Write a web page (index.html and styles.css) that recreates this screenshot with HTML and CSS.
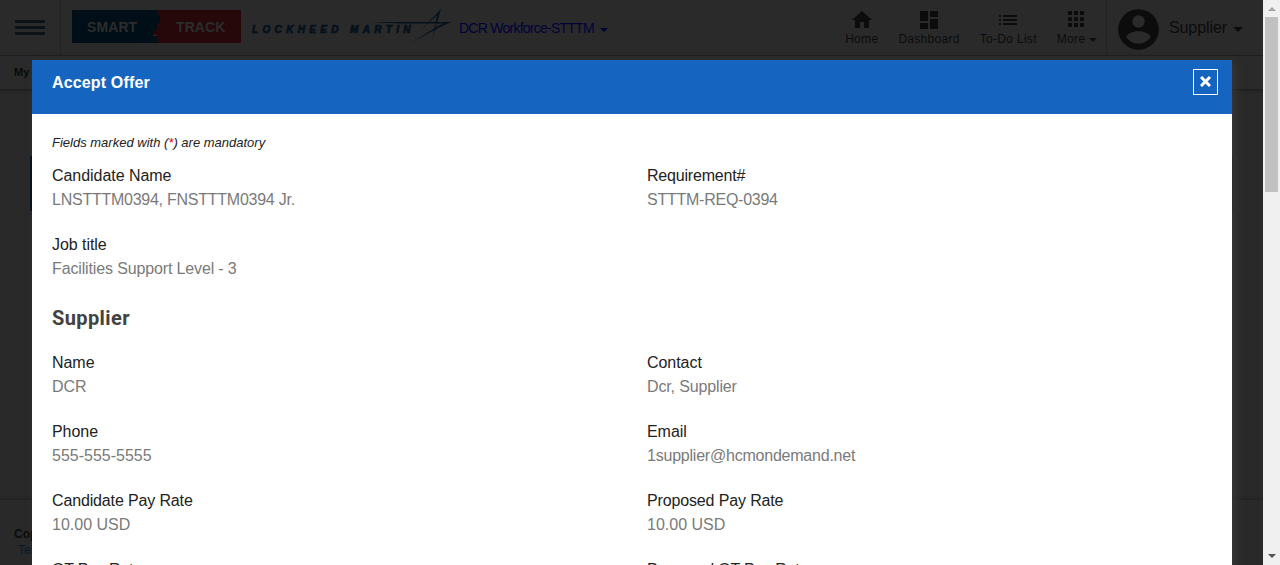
FILE: index.html
```
<!DOCTYPE html>
<html lang="en">
<head>
<meta charset="utf-8">
<title>Accept Offer</title>
<link rel="stylesheet" href="styles.css">
</head>
<body>
<div class="viewport">
  <div class="page">
    <header class="topbar">
      <div class="menu"><span></span><span></span><span></span></div>
      <div class="brand">
        <svg class="plates" width="169" height="33" viewBox="0 0 169 33"><path fill="#26080b" d="M81 0h88v33H85v-8h-4z"/><path fill="#000f17" d="M0 0h85v5h3v8h-3v7h-4v6h4v7H0z"/></svg>
        <span class="smart">SMART</span><span class="track">TRACK</span>
      </div>
      <div class="partner">
        <span class="partner-name">LOCKHEED MARTIN</span>
        <svg class="star" width="84" height="34" viewBox="0 0 84 34"><g fill="#05111c"><path d="M2 13L83 13L75 16L43 33L71 16L74 14.500H32z"/><path d="M72 0L52 21L68 6L63 33L67 17z"/></g><path fill="#2a2a2a" d="M64.500 14.800h4l-3.500 2z"/></svg>
      </div>
      <div class="client">DCR Workforce-STTTM</div><i class="caret caret-client"></i>
      <nav class="nav">
        <a class="home"><svg width="24" height="22" viewBox="0 0 24 22"><path d="M12 1L2 10h3v8h5v-6h4v6h5v-8h3z"/></svg><span>Home</span></a>
        <a class="dash"><svg width="24" height="22" viewBox="0 0 24 22"><path d="M3 1h8v10H3zM13 1h8v6h-8zM13 9h8v10h-8zM3 13h8v6H3z"/></svg><span>Dashboard</span></a>
        <a class="todo"><svg width="24" height="22" viewBox="0 0 24 22"><path d="M3 5h2v2H3zM7 5h14v2H7zM3 9h2v2H3zM7 9h14v2H7zM3 13h2v2H3zM7 13h14v2H7z"/></svg><span>To-Do List</span></a>
        <a class="more"><svg width="24" height="22" viewBox="0 0 24 22"><path d="M4 1h4v4H4zM10 1h4v4h-4zM16 1h4v4h-4zM4 7h4v4H4zM10 7h4v4h-4zM16 7h4v4h-4zM4 13h4v4H4zM10 13h4v4h-4zM16 13h4v4h-4z"/></svg><span>More <i class="caret"></i></span></a>
      </nav>
      <div class="user">
        <svg width="41" height="41" viewBox="0 0 41 41"><circle cx="20.5" cy="20.5" r="20.3" fill="#0c0c0c"/><circle cx="20.5" cy="12.5" r="6.2" fill="#2a2a2a"/><path fill="#2a2a2a" d="M8.3 28C9 24.300 16 22.300 20.500 22.300S32 24.300 32.700 28C27 36.900 14 36.900 8.300 28z"/></svg>
        <span>Supplier</span><i class="caret"></i>
      </div>
    </header>
    <div class="crumbs">My Offers</div>
    <main class="content"><div class="panel"></div></main>
    <footer class="foot"><b>Copyright</b><span>Terms</span></footer>
    <section class="modal">
      <div class="modal-head"><h1>Accept Offer</h1><button class="close"><svg width="11" height="11" viewBox="0 0 11 11"><path d="M1 1L10 10M10 1L1 10" stroke="#fff" stroke-width="3"/></svg></button></div>
      <div class="modal-body">
        <p class="note">Fields marked with (<em>*</em>) are mandatory</p>
        <dl class="fields">
          <div><dt>Candidate Name</dt><dd class="tight">LNSTTTM0394, FNSTTTM0394 Jr.</dd></div>
          <div><dt class="req">Requirement#</dt><dd class="tight">STTTM-REQ-0394</dd></div>
          <div><dt>Job title</dt><dd class="job">Facilities Support Level - 3</dd></div>
        </dl>
        <h2>Supplier</h2>
        <dl class="fields">
          <div><dt>Name</dt><dd>DCR</dd></div>
          <div><dt>Contact</dt><dd class="job">Dcr, Supplier</dd></div>
          <div><dt>Phone</dt><dd>555-555-5555</dd></div>
          <div><dt>Email</dt><dd class="mail">1supplier@hcmondemand.net</dd></div>
          <div><dt class="job">Candidate Pay Rate</dt><dd>10.00 USD</dd></div>
          <div><dt class="job">Proposed Pay Rate</dt><dd>10.00 USD</dd></div>
          <div><dt class="ot">OT Pay Rate</dt></div>
          <div><dt class="ot">Proposed OT Pay Rate</dt></div>
        </dl>
      </div>
    </section>
  </div>
  <div class="scroll"><i class="arrow-up"></i><div class="thumb"></div><i class="arrow-down"></i></div>
</div>
</body>
</html>
```

FILE: styles.css
```
* { box-sizing: border-box; }
body { margin: 0; overflow: hidden; font-family: "Liberation Sans", Arial, sans-serif; font-size: 16px; }
.viewport { display: flex; width: 1280px; height: 565px; overflow: hidden; }
.page { position: relative; display: flex; flex-direction: column; width: 1263px; height: 565px; background: #292929; overflow: hidden; }
.topbar { display: flex; flex: none; height: 56px; background: #2a2a2a; border-bottom: 1px solid #202020; color: #0c0c0c; }
.menu { width: 61px; padding: 20px 15px 0; border-right: 1px solid #222; display: flex; flex-direction: column; gap: 3px; }
.menu span { height: 3px; background: #0d1218; }
.brand { position: relative; width: 169px; height: 33px; margin: 10px 0 0 11px; color: #2c2c2c; font-weight: bold; font-size: 14px; line-height: 35px; display: flex; }
.plates { position: absolute; left: 0; top: 0; }
.smart, .track { position: relative; width: 89px; padding-left: 15px; letter-spacing: .1px; }
.track { width: 80px; }
.partner { position: relative; width: 218px; padding: 23px 0 0 11px; color: #05111c; }
.partner-name { font-size: 10px; line-height: 13px; font-weight: 900; font-style: italic; letter-spacing: 4.35px; white-space: nowrap; display: block; -webkit-text-stroke: .7px #05111c; }
.star { position: absolute; left: 128px; top: 9px; }
.client { width: 136px; padding-top: 20px; font-size: 14px; line-height: 17px; letter-spacing: -.75px; color: #02023a; white-space: nowrap; }
.caret { display: inline-block; border: 4px solid transparent; border-top-color: currentColor; border-bottom: 0; }
.caret-client { margin: 28px 0 0 5px; height: 4px; color: #02023a; }
.nav { position: relative; display: flex; flex: 1; justify-content: flex-end; padding: 9px 9px 0 0; gap: 20px; border-right: 1px solid #222; height: 54px; }
.nav a { display: flex; flex-direction: column; align-items: center; font-size: 12px; line-height: 14px; letter-spacing: .3px; white-space: nowrap; }
.nav svg { fill: #0c0c0c; margin-top: 1px; }
.nav .more { align-items: flex-start; }
.nav .more svg { margin-left: 7px; }
.nav .caret { margin-left: 0; vertical-align: 1px; }
.user { display: flex; width: 156px; padding: 9px 0 0 11px; font-size: 16px; }
.user span { margin: 9px 0 0 10px; line-height: 19px; letter-spacing: -.1px; }
.user .caret { margin: 18px 0 0 6px; height: 5px; border-width: 5px 5px 0; }
.crumbs { flex: none; height: 33px; padding: 9px 14px; background: #2a2a2a; box-shadow: 0 1px 3px #181818; font-size: 11px; line-height: 15px; font-weight: bold; color: #090909; }
.content { flex: 1; padding: 67px 30px 0; }
.panel { height: 55px; background: #02101f; }
.foot { flex: none; height: 65px; padding: 26px 14px; background: #292929; box-shadow: 0 -1px 3px #202020; font-size: 12px; line-height: 16px; color: #0b0b0b; }
.foot b, .foot span { display: block; }
.foot span { padding-left: 4px; color: #06192b; }
.modal { position: absolute; left: 32px; top: 60px; width: 1200px; height: 600px; background: #fff; box-shadow: 4px 3px 8px #363636; }
.modal-head { display: flex; justify-content: space-between; height: 54px; padding: 9px 14px 0 20px; background: #1565c0; color: #fff; }
h1 { margin: 4px 0 0; font-size: 16px; line-height: 19px; font-weight: bold; letter-spacing: .15px; }
.close { display: grid; place-items: center; width: 25px; height: 26px; padding: 0 0 2px; border: 1px solid #fff; background: none; }
.modal-body { padding: 20px 20px 0; }
.note { margin: 0; font-size: 13px; line-height: 17px; font-style: italic; color: #222; }
.note em { color: #e00; }
.fields { display: grid; grid-template-columns: 595px 565px; margin: 13px 0 0; row-gap: 21px; color: #222; }
dt, dd { margin: 0; line-height: 24px; white-space: nowrap; }
dt { letter-spacing: -.05px; }
dd { color: #7a7a7a; }
.tight { letter-spacing: -.25px; }
.req { letter-spacing: -.2px; }
.job { letter-spacing: -.14px; }
.mail { letter-spacing: -.22px; }
.ot { letter-spacing: -.2px; }
h2 { margin: 25px 0 0; font: bold 20px/24px Roboto, sans-serif; letter-spacing: .4px; color: #424242; }
h2 + .fields { margin-top: 21px; }
.scroll { display: flex; flex-direction: column; width: 17px; background: #f0f0f0; align-items: center; }
.thumb { width: 13px; height: 175px; background: #c1c1c1; }
.arrow-up { margin: 7px 0 6px; border: 4px solid transparent; border-top: 0; border-bottom-color: #a3a3a3; }
.arrow-down { margin: auto 0 7px; border: 4px solid transparent; border-bottom: 0; border-top-color: #505050; }
```
